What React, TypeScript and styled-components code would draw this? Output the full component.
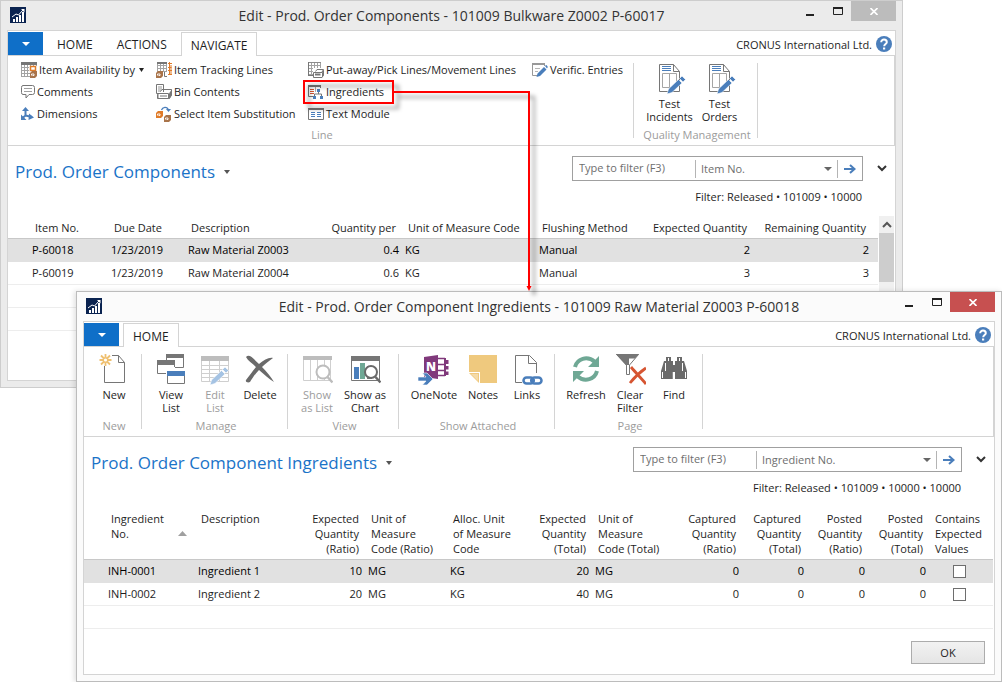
import React from "react";
import styled, { createGlobalStyle, css } from "styled-components";

const GlobalStyle = createGlobalStyle`
  * { box-sizing: border-box; }
  body { margin: 0; background: #fff; }
  body, button, input, select {
    font-family: "Open Sans", "Segoe UI", sans-serif;
    font-size: 11px;
    line-height: 15px;
    color: #1e1e1e;
  }
  button { background: none; border: 0; padding: 0; cursor: pointer; }
  svg { display: block; flex: none; }
`;

const line = "#d4d4d4";
const grey = "#767676";
const blue = "#4a7ebb";

/* ---------- window frame ---------- */

const Desktop = styled.main`
  position: relative;
  min-height: 100vh;
  overflow: hidden;
`;

const Frame = styled.section<{ $front?: boolean }>`
  position: absolute;
  padding: 0 6px 6px;
  border: 1px solid ${(p) => (p.$front ? "#bcbcbc" : "#cdcdcd")};
  background: ${(p) => (p.$front ? "#fbfbfb" : "#ebebeb")};
  ${(p) =>
    p.$front
      ? css`top: 291px; left: 76px; right: 0; box-shadow: -2px 0 5px rgba(0, 0, 0, 0.12);`
      : css`top: 0; left: 0; right: 99px;`}
`;

const TitleBar = styled.header`
  display: flex;
  align-items: flex-start;
  height: 29px;
`;

const TitleIcon = styled.span`
  padding: 6px 0 0 3px;
  width: 100px;
`;

const Title = styled.h1`
  flex: 1;
  margin: 0;
  font-size: 14px;
  font-weight: 400;
  line-height: 29px;
  text-align: center;
  white-space: nowrap;
  color: #333;
`;

const Controls = styled.div`
  display: flex;
  justify-content: flex-end;
  width: 100px;
`;

const Control = styled.button<{ $bg?: string }>`
  display: flex;
  justify-content: center;
  align-items: center;
  width: ${(p) => (p.$bg ? 45 : 27)}px;
  height: 20px;
  background: ${(p) => p.$bg || "none"};
`;

const Client = styled.div`
  border: 1px solid ${line};
  background: #fff;
`;

/* ---------- ribbon ---------- */

const TabBar = styled.nav`
  display: flex;
  align-items: flex-end;
  gap: 4px;
  height: 25px;
  padding-right: 3px;
  border-bottom: 1px solid ${line};
`;

const AppMenu = styled.button`
  display: flex;
  align-items: center;
  justify-content: center;
  width: 35px;
  height: 23px;
  background: #0f6fc8;
`;

const Tab = styled.button<{ $active?: boolean }>`
  height: 23px;
  padding: 2px 10px 0;
  font-size: 12px;
  ${(p) =>
    p.$active &&
    css`
      height: 24px;
      margin-bottom: -1px;
      padding: 1px 9px 0;
      border: 1px solid ${line};
      border-bottom: 0;
      background: #fff;
    `}
`;

const Company = styled.span`
  margin-left: auto;
  line-height: 20px;
`;

const Help = styled.button`
  align-self: center;
  padding-top: 2px;
`;

const Ribbon = styled.div`
  display: flex;
  height: 90px;
  border-right: 1px solid ${line};
  border-bottom: 1px solid ${line};
`;

const Separator = styled.span`
  width: 1px;
  height: 75px;
  margin-top: 7px;
  background: ${line};
`;

const Group = styled.div<{ $width?: number }>`
  display: flex;
  flex-direction: column;
  min-width: ${(p) => p.$width || 0}px;
  padding-bottom: 3px;
`;

const GroupLabel = styled.span`
  margin-top: auto;
  padding-left: 3px;
  line-height: 14px;
  text-align: center;
  color: #9c9c9c;
`;

const SmallGrid = styled.div`
  display: grid;
  grid-template-columns: 135px 152px 224px 1fr;
  grid-template-rows: repeat(3, 22px);
  grid-auto-flow: column;
  padding: 3px 0 0 13px;
`;

const SmallButton = styled.button`
  display: flex;
  align-items: center;
  gap: 2px;
  white-space: nowrap;
`;

const SmallLabel = styled.span`
  padding: 0 2px 2px 0;
`;

const BigRow = styled.div<{ $center?: boolean }>`
  display: flex;
  justify-content: ${(p) => (p.$center ? "center" : "flex-start")};
  padding: ${(p) => (p.$center ? "7px 2px 0 0" : "7px 2px 0 5px")};
`;

const BigButton = styled.button<{ $w: number }>`
  display: flex;
  flex-direction: column;
  align-items: center;
  gap: 2px;
  width: ${(p) => p.$w}px;
  line-height: 13px;
  text-align: center;
  white-space: pre;
  &:disabled { color: #9c9c9c; }
`;

/* ---------- page head and filter ---------- */

const PageHead = styled.div`
  display: flex;
  align-items: flex-start;
  justify-content: space-between;
  padding: 10px 0 0 7px;
`;

const Heading = styled.h2`
  display: flex;
  align-items: center;
  gap: 9px;
  margin: 0;
  padding-top: 3px;
  font-size: 17px;
  font-weight: 400;
  line-height: 26px;
  color: #1a73c8;
`;

const FilterArea = styled.div`
  display: flex;
  flex-direction: column;
`;

const FilterRow = styled.div`
  display: flex;
`;

const FilterForm = styled.form`
  display: flex;
  align-items: center;
  height: 25px;
  border: 1px solid #a0a0a0;
`;

const FilterInput = styled.input`
  width: 122px;
  height: 22px;
  padding: 0 6px 2px;
  border: 0;
  outline: 0;
  &::placeholder { color: #6e6e6e; opacity: 1; }
`;

const SelectWrap = styled.span<{ $w: number }>`
  display: grid;
  grid-template-columns: 1fr 8px;
  align-items: center;
  width: ${(p) => p.$w}px;
  height: 18px;
  padding-right: 5px;
  border: solid #b4b4b4;
  border-width: 0 1px;
`;

const FilterSelect = styled.select`
  appearance: none;
  height: 18px;
  padding: 0 5px 1px;
  border: 0;
  background: none;
  color: #6e6e6e;
`;

const Go = styled.button`
  display: flex;
  justify-content: center;
  width: 24px;
`;

const Expand = styled.button`
  display: flex;
  align-items: center;
  justify-content: center;
  width: 32px;
  padding-left: 6px;
`;

const FilterText = styled.p`
  margin: 8px 33px 0 0;
  line-height: 16px;
  text-align: right;
`;

/* ---------- data table ---------- */

const TableArea = styled.div`
  display: flex;
  padding: 11px 1px 0 0;
`;

const Table = styled.table`
  flex: 1;
  width: 100%;
  table-layout: fixed;
  border-collapse: separate;
  border-spacing: 0;
`;

const Th = styled.th<{ $right?: boolean }>`
  padding: 4px 6px 3px;
  border-bottom: 1px solid #c8c8c8;
  font-weight: 400;
  line-height: 15px;
  text-align: ${(p) => (p.$right ? "right" : "left")};
  vertical-align: top;
  white-space: pre;
`;

const HeadFlex = styled.span`
  display: flex;
  justify-content: space-between;
  align-items: flex-end;
  svg { margin: 0 2px 5px 0; }
`;

const Td = styled.td<{ $right?: boolean }>`
  height: 23px;
  padding: 0 3px 2px;
  border-bottom: 1px solid #ededed;
  text-align: ${(p) => (p.$right ? "right" : "left")};
  white-space: nowrap;
`;

const Tr = styled.tr<{ $selected?: boolean }>`
  ${(p) =>
    p.$selected &&
    css`
      background: #e1e1e1;
      color: #000;
      ${Td} { border-color: #e1e1e1; }
    `}
`;

const Check = styled.input`
  appearance: none;
  display: block;
  width: 13px;
  height: 13px;
  margin: 2px 0 0 21px;
  border: 1px solid #6e6e6e;
  background: #fff;
`;

const ScrollTrack = styled.div`
  display: flex;
  flex-direction: column;
  align-items: center;
  width: 15px;
  margin-left: 1px;
  background: #f0f0f0;
`;

const ScrollThumb = styled.div`
  width: 15px;
  height: 49px;
  background: #cdcdcd;
`;

const ScrollUp = styled.button`
  display: flex;
  align-items: center;
  justify-content: center;
  width: 15px;
  height: 17px;
`;

const Spacer = styled.div`
  height: 49px;
`;

const Footer = styled.footer`
  display: flex;
  justify-content: flex-end;
  padding: 12px 9px 10px;
`;

const OkButton = styled.button`
  width: 74px;
  height: 23px;
  border: 1px solid #acacac;
  background: linear-gradient(#f2f2f2, #e5e5e5);
`;

const Callout = styled.svg`
  position: absolute;
  top: 0;
  left: 0;
  pointer-events: none;
  filter: drop-shadow(5px 5px 2px rgba(0, 0, 0, 0.4));
`;

/* ---------- icons ---------- */

const Svg = ({ w = 16, h = 16, children }: { w?: number; h?: number; children: React.ReactNode }) => (
  <svg width={w} height={h} viewBox={`0 0 ${w} ${h}`} fill="none" aria-hidden="true">{children}</svg>
);

const Caret = ({ w = 7, color = "#444" }: { w?: number; color?: string }) => (
  <Svg w={w} h={4}><path d={`M0 0H${w}L${w / 2} 4Z`} fill={color} /></Svg>
);

const AppLogo = () => (
  <Svg>
    <path d="M0 0H16V16H0Z" fill="#0a2350" />
    <path d="M3 15V12h2v3ZM6 15V10h2v5ZM9 15V8h2v7ZM12 15V5h2v10Z" fill="#fff" />
    <path d="M2 10L6 7L8.500 8L13 3" stroke="#fff" strokeWidth="1" />
    <path d="M11 2h3.500v3.500Z" fill="#fff" />
  </Svg>
);

const Box = ({ x, y, c }: { x: number; y: number; c: string }) => (
  <g transform={`translate(${x} ${y})`}>
    <path d="M0 2L2 0H7V5L5 7H0Z" fill={c} />
    <path d="M1.500 4.500V3H4V4.500H2.500" stroke="#fff" strokeWidth=".9" />
  </g>
);

const Grid = ({ x, y, w, h }: { x: number; y: number; w: number; h: number }) => {
  let d = "";
  for (let i = 0; i <= w; i += 3) d += `M${x + i + 0.5} ${y}V${y + h}`;
  for (let j = 0; j <= h; j += 3) d += `M${x} ${y + j + 0.5}H${x + w}`;
  return <path d={d} stroke="#a3a3a3" />;
};

const Printer = ({ x, y }: { x: number; y: number }) => (
  <g transform={`translate(${x} ${y})`}>
    <path d="M0 3H9V9H0Z" fill="#fff" />
    <path d="M2.500 2.500L4 .500H10.500L9 3M.500 3.500H9L10.500 1.500V6L9 8.500H.500Z" stroke={grey} fill="#fff" />
    <path d="M9 3.500L11 1V6L9 8.500Z" fill={grey} />
    <path d="M2 5.500H7.500" stroke={grey} strokeWidth="2" />
  </g>
);

const AvailabilityIcon = () => (
  <Svg>
    <Grid x={0} y={2} w={15} h={12} />
    <path d="M0 0H16V3H0Z" fill={grey} />
    <path d="M8 4H16V16H9V9H8Z" fill="#fff" />
    <path d="M9.500 4.500H14.500V8.500H9.500Z" stroke="#e07b28" strokeWidth="1.500" />
    <Box x={9} y={9} c="#a9744a" />
  </Svg>
);
const TrackingIcon = () => (
  <Svg>
    <Grid x={1} y={0} w={10} h={9} />
    <path d="M1 0H11V2H1Z" fill={grey} />
    <path d="M12 1.500H16M13.500 0V13M12 5.500H15.500M12 8.500H16M15 3V12M12 12.500H16" stroke="#e07b28" />
    <path d="M8.500 10V14.500H11" stroke={grey} />
    <Box x={0} y={9} c="#a9744a" />
  </Svg>
);
const PutAwayIcon = () => (
  <Svg>
    <Grid x={0} y={0} w={13} h={13} />
    <path d="M0 0H13M.500 0V13.500M0 13.500H5" stroke={grey} />
    <path d="M5 6H16V16H5Z" fill="#fff" />
    <Printer x={5} y={7} />
  </Svg>
);
const BinIcon = () => (
  <Svg>
    <path d="M.500 .500H7.500V8M.500 .500V9.500H4" stroke={grey} />
    <path d="M2 3H6M2 5H6M2 7H5" stroke="#999" />
    <path d="M4.500 7.500L6 5.500H15.500V11L13.500 14.500H1.500V10.500H4" stroke={grey} />
    <path d="M2 9.500H12.500V14.500H2Z" stroke={grey} fill="#fff" />
    <path d="M4 12H11" stroke={grey} />
    <path d="M13 9.500L16 5V11L13 15Z" fill={grey} />
  </Svg>
);
const SubstitutionIcon = () => (
  <Svg>
    <path d="M5.500 4C6.500 1 11 0 12.500 4" stroke={blue} strokeWidth="1.300" />
    <path d="M10 3H15L12.500 6Z" fill={blue} />
    <Box x={0} y={5} c="#e07b28" />
    <Box x={8} y={9} c="#a9744a" />
  </Svg>
);
const CommentsIcon = () => (
  <Svg w={14}>
    <path d="M2 1.500H11.500Q13.500 1.500 13.500 3.500V8.500Q13.500 10.500 11.500 10.500H8L5 14V10.500H2Q.500 10.500 .500 8.500V3.500Q.500 1.500 2 1.500Z" stroke={grey} />
    <path d="M3 4.500H11M3 7.500H11" stroke="#a0a0a0" />
  </Svg>
);
const DimensionsIcon = () => (
  <Svg w={14}>
    <path d="M4.500 3V9.500L1.500 12M4.500 9.500L11 11" stroke={blue} strokeWidth="2" />
    <path d="M1 5L4.500 1L8 5ZM0 8.500V14H5.500ZM8 7.500L13 11.500L7.500 14Z" fill={blue} />
  </Svg>
);
const IngredientsIcon = () => (
  <Svg>
    <path d="M.500 1V12.500H5M12.500 4V1" stroke={grey} />
    <path d="M0 1H13V3H0Z" fill={grey} />
    <path d="M2 5.500H6M2 7.500H6M2 9.500H6" stroke="#d65532" />
    <path d="M7.500 3V8" stroke="#aaa" />
    <path d="M9 5H12V8H9ZM5 12H8V15H5ZM12 12H15V15H12Z" fill={blue} />
    <path d="M10.500 8V10M6.500 12V10H13.500V12" stroke={grey} />
  </Svg>
);
const TextModuleIcon = () => (
  <Svg>
    <path d="M.500 2.500H15.500V13.500H.500Z" stroke={grey} />
    <path d="M0 2H16V4H0Z" fill={grey} />
    <path d="M3 6.500H7M3 8.500H7M3 10.500H7M9 6.500H13M9 8.500H13M9 10.500H13" stroke={blue} />
  </Svg>
);
const VerificIcon = () => (
  <Svg>
    <path d="M.500 1V13.500H5M12.500 1V4" stroke="#999" />
    <path d="M0 1H13V3H0Z" fill="#999" />
    <path d="M3 6.500H8M3 9.500H6" stroke="#b5b5b5" />
    <path d="M4.500 15L5.500 11.500L12 5L14.500 7.500L8 14ZM13 4L14 3Q15 3 15.800 5L15 6.500Z" fill={blue} />
  </Svg>
);

const Pencil = ({ c }: { c: string }) => (
  <path d="M11 31L12.500 26L22.500 16.500L26 20L16 29.500ZM23.500 15.500L26 13L29.500 16.500L27 19Z" fill={c} stroke="#fff" strokeWidth=".6" />
);
const TestIcon = () => (
  <Svg w={32} h={32}>
    <path d="M5.500 1.500H19.500L25.500 8.500V28.500H5.500Z" stroke={grey} />
    <path d="M19.500 1.500V8.500H25.500" stroke={grey} />
    <path d="M8.500 10.500H22.500V24.500H8.500ZM15.500 10.500V24.500" stroke="#a5a5a5" />
    <path d="M8 3.500H17M8 5.500H17M8 7.500H17" stroke={blue} />
    <g transform="translate(2 0)"><Pencil c={blue} /></g>
  </Svg>
);
const NewIcon = () => (
  <Svg w={32} h={32}>
    <path d="M14 1.500H20.500L26.500 8.500V28.500H6.500V12M20.500 1.500V8.500H26.500" stroke={grey} />
    <path d="M7.500 0V12M1.500 6H13.500M3 1.500L12 10.500M12 1.500L3 10.500" stroke="#efc070" strokeWidth="1.800" />
    <circle cx="7.500" cy="6" r="2.200" fill="#fff" stroke="#efc070" strokeWidth="1.300" />
  </Svg>
);
const ViewListIcon = () => (
  <Svg w={32} h={32}>
    <path d="M11.500 1V6M28.500 2V13.500H20" stroke={grey} />
    <path d="M11 0H29V4H11Z" fill={grey} />
    <path d="M2.500 7V19.500H11M19.500 10V13" stroke={grey} />
    <path d="M2 6H20V11H2Z" fill={grey} />
    <path d="M12.500 18.500H29.500V29.500H12.500Z" stroke={grey} fill="#fff" />
    <path d="M12 17H30V22H12Z" fill={blue} />
  </Svg>
);
const EditListIcon = () => (
  <Svg w={32} h={32}>
    <path d="M2.500 6V27.500H29.500V6M2 11.500H30M2 15.500H30M2 19.500H30M2 23.500H30M10.500 6V27M20.500 6V27" stroke="#cfcfcf" />
    <path d="M2 2H30V7H2Z" fill="#bdbdbd" />
    <Pencil c="#a5c3e3" />
  </Svg>
);
const DeleteIcon = () => (
  <Svg w={32} h={32}>
    <path d="M2 3C5 0 8 3 15 10C20 6 25 3 29 4C25 7 21 10 18 13C23 18 27 23 30 28C25 25 20 20 15 16C11 20 8 25 6 28C4 29 1 28 2 26C5 22 8 18 12 13C8 9 4 7 2 3Z" fill="#6a6a6a" />
  </Svg>
);
const ShowListIcon = () => (
  <Svg w={32} h={32}>
    <path d="M2.500 5V26.500H29.500V5M9.500 6V26M16.500 6V26M23.500 6V26" stroke="#cfcfcf" />
    <path d="M2 2H31V6H2Z" fill="#bdbdbd" />
    <circle cx="22" cy="18" r="6.500" fill="#fff" stroke="#bdbdbd" strokeWidth="2" />
    <path d="M26.500 23L31.500 28.500" stroke="#bdbdbd" strokeWidth="2.500" />
  </Svg>
);
const ShowChartIcon = () => (
  <Svg w={32} h={32}>
    <path d="M2.500 5V26.500H30.500V5" stroke={grey} />
    <path d="M2 2H31V7H2Z" fill={grey} />
    <path d="M5 13H10V25H5Z" fill={blue} />
    <path d="M11 9H16V25H11Z" fill="#6fa895" />
    <path d="M18 12H23V25H18Z" fill={grey} />
    <circle cx="22" cy="18" r="6" fill="#fff" stroke="#6a6a6a" strokeWidth="2" />
    <path d="M26.500 23L31.500 28.500" stroke="#6a6a6a" strokeWidth="2.500" />
  </Svg>
);
const OneNoteIcon = () => (
  <Svg w={32} h={32}>
    <path d="M20 4.500H27M20 10.500H27M20 16.500H27M20 21.500H27" stroke="#80397b" strokeWidth="1.600" />
    <path d="M26 4H28V22H26ZM28 6H30.500V10H28ZM28 12H30.500V15.500H28ZM28 17.500H30.500V21H28Z" fill="#80397b" />
    <path d="M6 3L20 1V25L6 23Z" fill="#80397b" />
    <text x="8" y="17" fontFamily="Open Sans, sans-serif" fontSize="12" fontWeight="800" fill="#fff">N</text>
    <path d="M0 23H8L4.500 19H9L15 25L9 31H4.500L8 27H0Z" fill={blue} stroke="#fff" strokeWidth=".6" />
  </Svg>
);
const NotesIcon = () => (
  <Svg w={32} h={32}>
    <path d="M2 1H30V29H13V18H2Z" fill="#efc97e" />
    <path d="M2 19H12V29Z" fill="#efc97e" />
    <path d="M4 20H11V27Z" fill="#f5dba8" />
  </Svg>
);
const LinksIcon = () => (
  <Svg w={32} h={32}>
    <path d="M11 28.500H4.500V1.500H18.500L25.500 8.500V19M17.500 1.500V9.500H25.500" stroke={grey} />
    <rect x="12.500" y="23.500" width="10" height="6" rx="3" stroke={blue} strokeWidth="2.500" />
    <rect x="20.500" y="23.500" width="10" height="6" rx="3" stroke={blue} strokeWidth="2.500" />
    <path d="M19 26.500H24" stroke={blue} strokeWidth="2.500" />
  </Svg>
);
const RefreshIcon = () => (
  <Svg w={32} h={32}>
    <path d="M5 13C7 5 17 1 25 8M27 17C25 25 15 29 7 22" stroke="#6fa895" strokeWidth="4" />
    <path d="M29 2V13H18ZM3 28V17H14Z" fill="#6fa895" />
  </Svg>
);
const ClearFilterIcon = () => (
  <Svg w={32} h={32}>
    <path d="M2.500 .500H24.500L15.500 11V20.500H12.500V11Z" fill="#fff" stroke={grey} />
    <path d="M2 0H25L21 4.500H13V11H12Z" fill={grey} />
    <path d="M2 0H15V11H12Z" fill={grey} />
    <path d="M17 13C22 19 27 24 32 30M32 14C26 18 20 24 16 29" stroke="#d65532" strokeWidth="2.800" />
  </Svg>
);
const FindIcon = () => (
  <Svg w={32} h={32}>
    <path d="M8 3H13V7H15V25H3V17L6 7H8ZM19 3H24V7H26L29 17V25H17V7H19Z" fill="#6a6a6a" />
    <path d="M13 11H19V18H13Z" fill="#6a6a6a" />
    <path d="M7.500 9V17M4.500 18V24M10.500 4V7M24.500 9V17M27.500 18V24M21.500 4V7" stroke="#fff" />
    <path d="M15.500 18V26" stroke="#fff" strokeWidth="1.500" />
  </Svg>
);
const HelpIcon = () => (
  <Svg>
    <circle cx="8" cy="8" r="8" fill={blue} />
    <path d="M5.200 6.300C5.200 2.600 10.800 2.800 10.800 6.200C10.800 8 8.200 8.200 8.200 10.300" stroke="#fff" strokeWidth="2" />
    <path d="M7 11.500h2.200v2H7Z" fill="#fff" />
  </Svg>
);
const ArrowIcon = () => (
  <Svg w={12} h={10}><path d="M0 5H10M6 1L10.500 5L6 9" stroke={blue} strokeWidth="2" /></Svg>
);
const ChevronIcon = ({ up }: { up?: boolean }) => (
  <Svg w={10} h={7}>
    <path d={up ? "M1 6L5 2L9 6" : "M1 1L5 5L9 1"} stroke={up ? "#555" : "#333"} strokeWidth="2" />
  </Svg>
);

/* ---------- shared parts ---------- */

function WindowTitle({ title, close }: { title: string; close: string }) {
  return (
    <TitleBar>
      <TitleIcon><AppLogo /></TitleIcon>
      <Title>{title}</Title>
      <Controls>
        <Control aria-label="Minimize"><Svg w={9} h={9}><path d="M0 7H8V9H0Z" fill="#222" /></Svg></Control>
        <Control aria-label="Maximize"><Svg w={10} h={8}><path d="M.500 1H9.500V7.500H.500Z" stroke="#222" /><path d="M0 0H10V2H0Z" fill="#222" /></Svg></Control>
        <Control aria-label="Close" $bg={close}><Svg w={8} h={7}><path d="M.500 0L7.500 7M7.500 0L.500 7" stroke="#fff" strokeWidth="1.600" /></Svg></Control>
      </Controls>
    </TitleBar>
  );
}

function Tabs({ names, active }: { names: string[]; active: string }) {
  return (
    <TabBar>
      <AppMenu aria-label="Application menu"><Caret w={8} color="#fff" /></AppMenu>
      {names.map((n) => <Tab key={n} $active={n === active}>{n}</Tab>)}
      <Company>CRONUS International Ltd.</Company>
      <Help aria-label="Help"><HelpIcon /></Help>
    </TabBar>
  );
}

type Big = { icon: React.ReactNode; text: string; w: number; off?: boolean };

function BigGroup({ label, items, width, center }: { label: string; items: Big[]; width?: number; center?: boolean }) {
  return (
    <>
      <Group $width={width}>
        <BigRow $center={center}>
          {items.map((b) => (
            <BigButton key={b.text} $w={b.w} disabled={b.off}>{b.icon}{b.text}</BigButton>
          ))}
        </BigRow>
        <GroupLabel>{label}</GroupLabel>
      </Group>
      <Separator />
    </>
  );
}

function PageHeader({ title, field, width, filter }: { title: string; field: string; width: number; filter: string }) {
  return (
    <PageHead>
      <Heading>{title}<Caret w={6} color="#555" /></Heading>
      <FilterArea>
        <FilterRow>
          <FilterForm onSubmit={(e) => e.preventDefault()}>
            <FilterInput aria-label="Filter text" placeholder="Type to filter (F3)" />
            <SelectWrap $w={width}>
              <FilterSelect aria-label="Filter field"><option>{field}</option></FilterSelect>
              <Caret w={8} color="#666" />
            </SelectWrap>
            <Go aria-label="Apply filter"><ArrowIcon /></Go>
          </FilterForm>
          <Expand aria-label="Expand filter"><ChevronIcon /></Expand>
        </FilterRow>
        <FilterText>{filter}</FilterText>
      </FilterArea>
    </PageHead>
  );
}

type Column = { text: string; w?: number; right?: boolean; sorted?: boolean };
type Cell = string | boolean;

function DataTable({ columns, rows, blank }: { columns: Column[]; rows: Cell[][]; blank: number }) {
  const all = [...rows, ...Array.from({ length: blank }, () => columns.map(() => ""))] as Cell[][];
  return (
    <Table>
      <colgroup>{columns.map((c, i) => <col key={i} width={c.w} />)}</colgroup>
      <thead>
        <tr>
          {columns.map((c, i) => (
            <Th key={i} scope="col" $right={c.right}>
              {c.sorted
                ? <HeadFlex>{c.text}<Svg w={9} h={5}><path d="M0 5H9L4.500 0Z" fill="#a0a0a0" /></Svg></HeadFlex>
                : c.text}
            </Th>
          ))}
        </tr>
      </thead>
      <tbody>
        {all.map((r, n) => (
          <Tr key={n} $selected={n === 0}>
            {r.map((v, i) => (
              <Td key={i} $right={columns[i].right}>
                {typeof v === "boolean"
                  ? <Check type="checkbox" aria-label={`Contains expected values, row ${n + 1}`} defaultChecked={v} />
                  : v}
              </Td>
            ))}
          </Tr>
        ))}
      </tbody>
    </Table>
  );
}

/* ---------- data ---------- */

const lineActions: [React.ReactNode, string][] = [
  [<AvailabilityIcon />, "Item Availability by"],
  [<CommentsIcon />, "Comments"],
  [<DimensionsIcon />, "Dimensions"],
  [<TrackingIcon />, "Item Tracking Lines"],
  [<BinIcon />, "Bin Contents"],
  [<SubstitutionIcon />, "Select Item Substitution"],
  [<PutAwayIcon />, "Put-away/Pick Lines/Movement Lines"],
  [<IngredientsIcon />, "Ingredients"],
  [<TextModuleIcon />, "Text Module"],
  [<VerificIcon />, "Verific. Entries"],
];

const componentColumns: Column[] = [
  { text: "", w: 21 },
  { text: "Item No.", w: 79 },
  { text: "Due Date", w: 77 },
  { text: "Description" },
  { text: "Quantity per", w: 79, right: true },
  { text: "Unit of Measure Code", w: 134 },
  { text: "Flushing Method", w: 111 },
  { text: "Expected Quantity", w: 106, right: true },
  { text: "Remaining Quantity", w: 119, right: true },
  { text: "", w: 6 },
];
const componentRows: Cell[][] = [
  ["", "P-60018", "1/23/2019", "Raw Material Z0003", "0.4", "KG", "Manual", "2", "2", ""],
  ["", "P-60019", "1/23/2019", "Raw Material Z0004", "0.6", "KG", "Manual", "3", "3", ""],
];

const ingredientColumns: Column[] = [
  { text: "", w: 21 },
  { text: "Ingredient\nNo.", w: 90, sorted: true },
  { text: "Description" },
  { text: "Expected\nQuantity\n(Ratio)", w: 65, right: true },
  { text: "Unit of\nMeasure\nCode (Ratio)", w: 82 },
  { text: "Alloc. Unit\nof Measure\nCode", w: 80 },
  { text: "Expected\nQuantity\n(Total)", w: 65, right: true },
  { text: "Unit of\nMeasure\nCode (Total)", w: 85 },
  { text: "Captured\nQuantity\n(Ratio)", w: 65, right: true },
  { text: "Captured\nQuantity\n(Total)", w: 65, right: true },
  { text: "Posted\nQuantity\n(Ratio)", w: 61, right: true },
  { text: "Posted\nQuantity\n(Total)", w: 61, right: true },
  { text: "Contains\nExpected\nValues", w: 64 },
];
const ingredientRows: Cell[][] = [
  ["", "INH-0001", "Ingredient 1", "10", "MG", "KG", "20", "MG", "0", "0", "0", "0", false],
  ["", "INH-0002", "Ingredient 2", "20", "MG", "KG", "40", "MG", "0", "0", "0", "0", false],
];

export default function App() {
  return (
    <Desktop>
      <GlobalStyle />
      <Frame>
        <WindowTitle title="Edit - Prod. Order Components - 101009 Bulkware Z0002 P-60017" close="#bcbcbc" />
        <Client>
          <Tabs names={["HOME", "ACTIONS", "NAVIGATE"]} active="NAVIGATE" />
          <Ribbon>
            <Group $width={625}>
              <SmallGrid>
                {lineActions.map(([icon, text], i) => (
                  <SmallButton key={text}>
                    {icon}
                    <SmallLabel>{text}</SmallLabel>
                    {i === 0 && <Caret w={5} color="#222" />}
                  </SmallButton>
                ))}
              </SmallGrid>
              <GroupLabel>Line</GroupLabel>
            </Group>
            <Separator />
            <BigGroup label="Quality Management" width={123} center items={[
              { icon: <TestIcon />, text: "Test\nIncidents", w: 50 },
              { icon: <TestIcon />, text: "Test\nOrders", w: 50 },
            ]} />
          </Ribbon>
          <PageHeader title="Prod. Order Components" field="Item No." width={143} filter="Filter: Released • 101009 • 10000" />
          <TableArea>
            <DataTable columns={componentColumns} rows={componentRows} blank={2} />
            <ScrollTrack>
              <ScrollUp aria-label="Scroll up"><ChevronIcon up /></ScrollUp>
              <ScrollThumb />
            </ScrollTrack>
          </TableArea>
          <Spacer />
        </Client>
      </Frame>

      <Frame $front>
        <WindowTitle title="Edit - Prod. Order Component Ingredients - 101009 Raw Material Z0003 P-60018" close="#c75050" />
        <Client>
          <Tabs names={["HOME"]} active="HOME" />
          <Ribbon>
            <BigGroup label="New" items={[{ icon: <NewIcon />, text: "New", w: 50 }]} />
            <BigGroup label="Manage" items={[
              { icon: <ViewListIcon />, text: "View\nList", w: 48 },
              { icon: <EditListIcon />, text: "Edit\nList", w: 40, off: true },
              { icon: <DeleteIcon />, text: "Delete", w: 50 },
            ]} />
            <BigGroup label="View" width={110} items={[
              { icon: <ShowListIcon />, text: "Show\nas List", w: 48, off: true },
              { icon: <ShowChartIcon />, text: "Show as\nChart", w: 48 },
            ]} />
            <BigGroup label="Show Attached" items={[
              { icon: <OneNoteIcon />, text: "OneNote", w: 60 },
              { icon: <NotesIcon />, text: "Notes", w: 38 },
              { icon: <LinksIcon />, text: "Links", w: 50 },
            ]} />
            <BigGroup label="Page" items={[
              { icon: <RefreshIcon />, text: "Refresh", w: 52 },
              { icon: <ClearFilterIcon />, text: "Clear\nFilter", w: 36 },
              { icon: <FindIcon />, text: "Find", w: 52 },
            ]} />
          </Ribbon>
          <PageHeader title="Prod. Order Component Ingredients" field="Ingredient No." width={181} filter="Filter: Released • 101009 • 10000 • 10000" />
          <TableArea>
            <DataTable columns={ingredientColumns} rows={ingredientRows} blank={1} />
          </TableArea>
          <Footer><OkButton>OK</OkButton></Footer>
        </Client>
      </Frame>

      <Callout width="560" height="300" viewBox="0 0 560 300" fill="none" aria-hidden="true">
        <path d="M304 81H393V103H304ZM394 92H529V287" stroke="#f00" strokeWidth="2" />
        <path d="M526.500 286H531.500L529 291Z" fill="#f00" />
      </Callout>
    </Desktop>
  );
}
